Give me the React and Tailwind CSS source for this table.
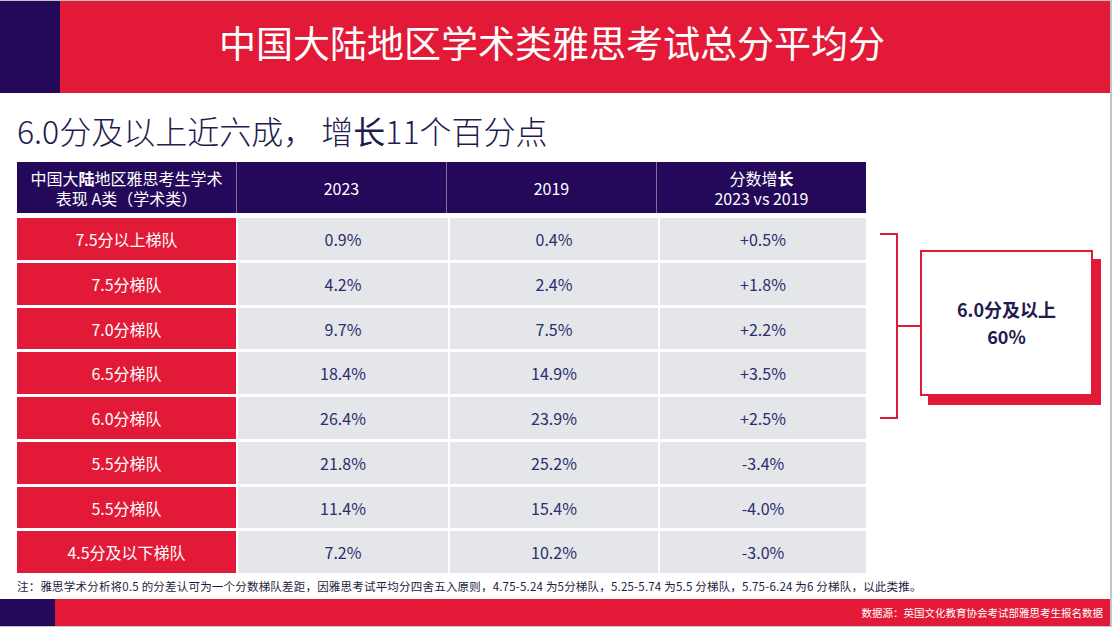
const rows = [
  { label: "7.5分以上梯队", a: "0.9%", b: "0.4%", c: "+0.5%", h: "h-[42px]" },
  { label: "7.5分梯队", a: "4.2%", b: "2.4%", c: "+1.8%", h: "h-[42px]" },
  { label: "7.0分梯队", a: "9.7%", b: "7.5%", c: "+2.2%", h: "h-[41px]" },
  { label: "6.5分梯队", a: "18.4%", b: "14.9%", c: "+3.5%", h: "h-[42px]" },
  { label: "6.0分梯队", a: "26.4%", b: "23.9%", c: "+2.5%", h: "h-[42px]" },
  { label: "5.5分梯队", a: "21.8%", b: "25.2%", c: "-3.4%", h: "h-[42px]" },
  { label: "5.5分梯队", a: "11.4%", b: "15.4%", c: "-4.0%", h: "h-[41px]" },
  { label: "4.5分及以下梯队", a: "7.2%", b: "10.2%", c: "-3.0%", h: "h-[42px]" },
];

function Bracket() {
  // red bracket joining the 6.0+ rows to the summary box
  return (
    <svg width="40" height="186" viewBox="0 0 40 186" className="block">
      <path d="M0 1 H17 V185 H0" fill="none" stroke="#e31a37" strokeWidth="2" />
      <path d="M17 93 H40" fill="none" stroke="#e31a37" strokeWidth="2" />
    </svg>
  );
}

export default function App() {
  return (
    <div
      className="w-[1112px] h-[627px] overflow-hidden bg-white border-t border-b border-r-2 border-[#c4c4c4] flex flex-col"
      style={{ fontFamily: '"Noto Sans CJK SC", "Noto Sans", sans-serif' }}
    >
      {/* header */}
      <div className="h-[92px] flex shrink-0">
        <div className="w-[60px] bg-[#24095a]" />
        <div className="flex-1 bg-[#e31a37] flex items-center justify-center pr-[66px] pb-[10px]">
          <h1 className="text-white text-[37px] leading-none">
            中国大陆地区学术类雅思考试总分平均分
          </h1>
        </div>
      </div>

      {/* subtitle */}
      <div className="h-[69px] shrink-0 pl-[17px] pt-[18px]">
        <p className="text-[32px] leading-[38px] font-light text-[#231a4f] whitespace-nowrap">
          6.0分及以上近六成，<span className="inline-block w-[6px]" />增<span className="font-normal">长</span>11个百分点
        </p>
      </div>

      {/* table + summary */}
      <div className="flex shrink-0">
        <div className="ml-[17px] w-[849px]">
          <div className="h-[51px] flex bg-[#24095a] text-white text-[16px] leading-[20px]">
            <div className="w-[219px] flex items-center justify-center text-center">
              <div className="flex flex-col">
                <span>
                  中国大<span className="font-bold">陆</span>地区雅思考生学术
                </span>
                <span>表现 A类（学术类）</span>
              </div>
            </div>
            <div className="w-[210px] border-l border-[#7c6f9c] flex items-center justify-center">2023</div>
            <div className="w-[210px] border-l border-[#7c6f9c] flex items-center justify-center">2019</div>
            <div className="flex-1 border-l border-[#7c6f9c] flex items-center justify-center text-center">
              <div className="flex flex-col">
                <span>
                  分数增<span className="font-bold">长</span>
                </span>
                <span>2023 vs 2019</span>
              </div>
            </div>
          </div>
          <div className="mt-[5px] flex flex-col gap-[3px]">
            {rows.map((r, i) => (
              <div key={i} className={`${r.h} flex text-[16px]`}>
                <div className="w-[219px] bg-[#e31a37] text-white flex items-center justify-center">
                  {r.label}
                </div>
                <div className="w-[210px] ml-[2px] bg-[#e4e6e9] text-[#2b2d6e] flex items-center justify-center">
                  {r.a}
                </div>
                <div className="w-[208px] ml-[2px] bg-[#e4e6e9] text-[#2b2d6e] flex items-center justify-center">
                  {r.b}
                </div>
                <div className="flex-1 ml-[2px] bg-[#e4e6e9] text-[#2b2d6e] flex items-center justify-center">
                  {r.c}
                </div>
              </div>
            ))}
          </div>
        </div>

        <div className="ml-[14px] mt-[71px] flex items-start">
          <Bracket />
          <div className="mt-[17px] w-[173px] h-[146px] border-2 border-[#e31a37] bg-white shadow-[8px_9px_0_#e31a37] flex flex-col items-center justify-center text-[18px] leading-[27px] font-bold text-[#231a4f]">
            <span>6.0分及以上</span>
            <span>60%</span>
          </div>
        </div>
      </div>

      {/* note */}
      <div className="h-[26px] shrink-0 pl-[17px] text-[11.5px] tracking-[0.2px] leading-[26px] text-[#1d1b3d] whitespace-nowrap">
        注：雅思学术分析将0.5 的分差认可为一个分数梯队差距，因雅思考试平均分四舍五入原则，4.75-5.24 为5分梯队，5.25-5.74 为5.5 分梯队，5.75-6.24 为6 分梯队，以此类推。
      </div>

      {/* footer */}
      <div className="h-[27px] flex shrink-0">
        <div className="w-[55px] bg-[#24095a]" />
        <div className="flex-1 bg-[#e31a37] flex items-center justify-end pr-[7px]">
          <span className="text-white text-[10.5px]">数据源：英国文化教育协会考试部雅思考生报名数据</span>
        </div>
      </div>
    </div>
  );
}
